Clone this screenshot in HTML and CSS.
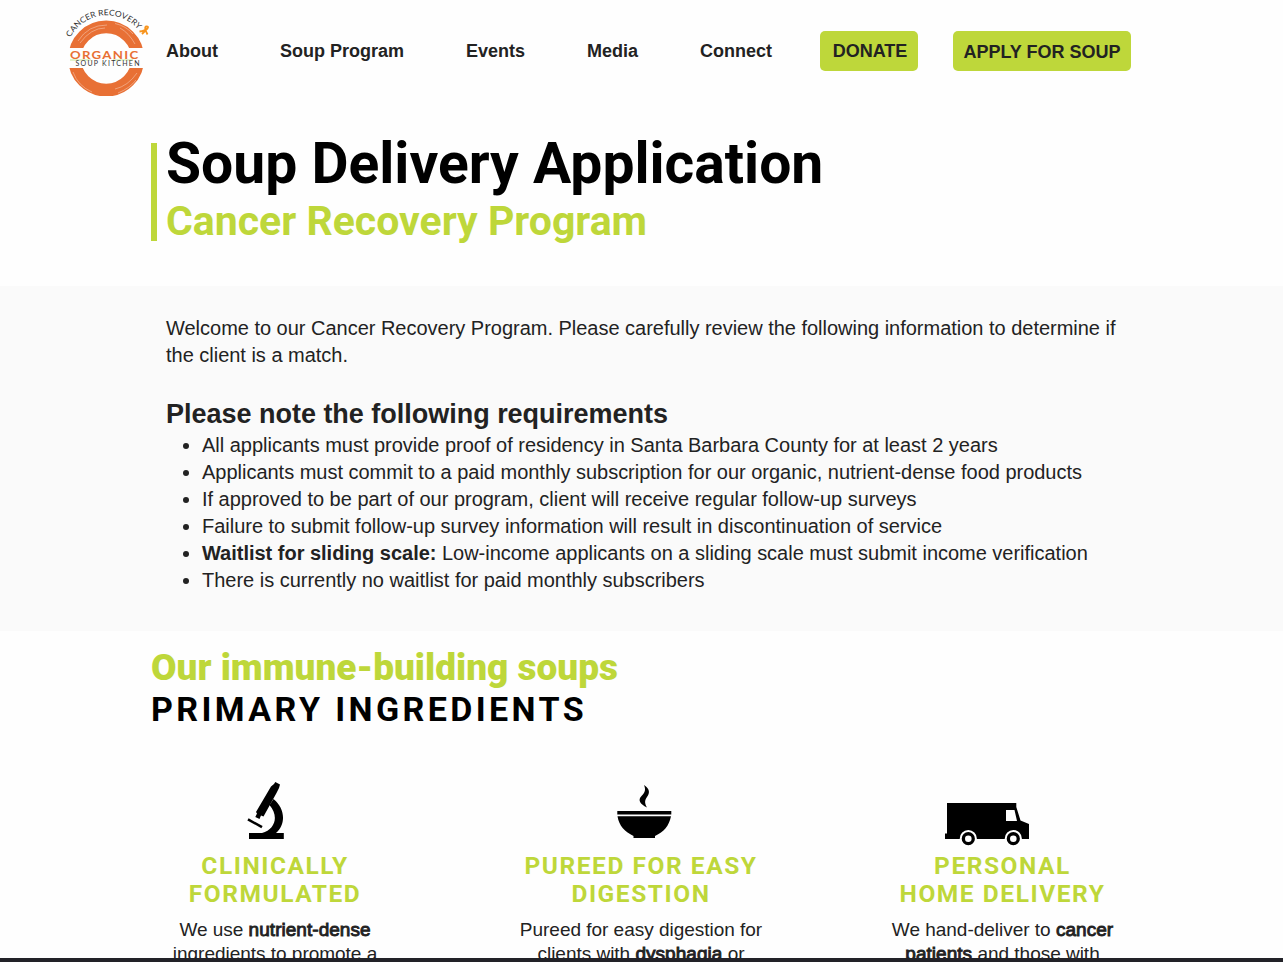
FILE: index.html
```html
<!DOCTYPE html>
<html lang="en">
<head>
<meta charset="utf-8">
<title>Soup Delivery Application</title>
<link rel="stylesheet" href="styles.css">
</head>
<body>
<header class="header">
  <svg class="logo" viewBox="0 0 90 97" role="img" aria-label="Cancer Recovery Organic Soup Kitchen">
    <defs>
      <path id="arc" d="M9.500 37.500A41 41 0 0 1 79 32"/>
      <clipPath id="halves"><path d="M0 0H90V48H0ZM0 68H90V96H0Z"/></clipPath>
    </defs>
    <g clip-path="url(#halves)" fill="none">
      <circle cx="45.200" cy="58.500" r="31.600" stroke="#e87035" stroke-width="12.800"/>
      <path d="M17 41Q27 25 46 25M19 43Q30 28 44 28M54 23.500Q65 26 72 34M59 28Q68 33 74 44M54 89Q67 86 76 73M57 93Q69 88 75 80M12 72Q17 86 31 92" stroke="#fff" stroke-width=".7" opacity=".5"/>
    </g>
    <text class="logo-arc"><textPath href="#arc" textLength="80" lengthAdjust="spacingAndGlyphs">CANCER RECOVERY</textPath></text>
    <path d="M9 60H30M52 60H72" stroke="#c3e59a" stroke-width="1"/>
    <text class="logo-name" x="9" y="58.500" textLength="69.500" lengthAdjust="spacingAndGlyphs">ORGANIC</text>
    <text class="logo-sub" x="14.500" y="65.600" textLength="64">SOUP KITCHEN</text>
    <path d="M78.500 31.500Q84 31 86.500 28.500Q88 26.500 85.500 26.500Q82.500 27 86.500 34.500M84.500 30.500L81 34" fill="none" stroke="#f7941d" stroke-width="1.800"/>
  </svg>
  <nav class="nav">
    <a>About</a><a>Soup Program</a><a>Events</a><a>Media</a><a>Connect</a>
  </nav>
  <a class="button donate">DONATE</a>
  <a class="button apply">APPLY FOR SOUP</a>
</header>
<main>
  <section class="hero">
    <div class="hero-rule"></div>
    <div>
      <h1>Soup Delivery Application</h1>
      <p class="subtitle">Cancer Recovery Program</p>
    </div>
  </section>
  <section class="notice">
    <p>Welcome to our Cancer Recovery Program. Please carefully review the following information to determine if<br>the client is a match.</p>
    <h2>Please note the following requirements</h2>
    <ul>
      <li>All applicants must provide proof of residency in Santa Barbara County for at least 2 years</li>
      <li>Applicants must commit to a paid monthly subscription for our organic, nutrient-dense food products</li>
      <li>If approved to be part of our program, client will receive regular follow-up surveys</li>
      <li>Failure to submit follow-up survey information will result in discontinuation of service</li>
      <li><b>Waitlist for sliding scale:</b> Low-income applicants on a sliding scale must submit income verification</li>
      <li>There is currently no waitlist for paid monthly subscribers</li>
    </ul>
  </section>
  <section class="soups">
    <h2 class="soups-title">Our immune-building soups</h2>
    <h3 class="soups-sub">PRIMARY INGREDIENTS</h3>
    <div class="features">
      <article>
        <svg class="icon" width="70" viewBox="240 772 70 76">
          <path d="M275.300 782L280 784.500L279 788L276.500 793L263.500 816.500L261 815.500L259.500 819L255.300 817L257 813.500L256 812L271 786.500L274 784Z"/>
          <path d="M273.500 799C285.500 809 286 824 276 833H283.800V839H249V833H262C275.500 829 279 816 269.500 805Z"/>
          <path d="M248 819.300L262 827.200" stroke="#000" stroke-width="2.500"/>
        </svg>
        <h4>CLINICALLY<br>FORMULATED</h4>
        <p>We use <b>nutrient-dense</b><br>ingredients to promote a</p>
      </article>
      <article>
        <svg class="icon" width="80" viewBox="601 772 80 76">
          <path d="M617.300 811H671.300V814.500H617.300ZM617.500 816.300H671C669 826 664 832 655 836V838H633.500V836C625 832 619 826 617.500 816.300Z"/>
          <path d="M644 785C650 789 650 793 647 797C644.500 800.500 644.500 803 647 807.500C640 804 637.500 800 641.500 796C645 792.500 646 790 644 785Z"/>
        </svg>
        <h4>PUREED FOR EASY<br>DIGESTION</h4>
        <p>Pureed for easy digestion for<br>clients with <b>dysphagia</b> or</p>
      </article>
      <article>
        <svg class="icon" width="135" viewBox="935 772 135 76">
          <path fill-rule="evenodd" d="M947 803H1016.300V807L1020.500 820.500L1029 824V839H945V833.500H947ZM1006 810V821H1017L1014.500 810Z"/>
          <g stroke="#fff" stroke-width="2"><circle cx="968.300" cy="838.700" r="7.600"/><circle cx="1013.300" cy="838.700" r="7.600"/></g>
          <g fill="#fff"><circle cx="968.300" cy="838.700" r="3.300"/><circle cx="1013.300" cy="838.700" r="3.300"/></g>
        </svg>
        <h4>PERSONAL<br>HOME DELIVERY</h4>
        <p>We hand-deliver to <b>cancer</b><br><b>patients</b> and those with</p>
      </article>
    </div>
  </section>
</main>
<div class="bottom-bar"></div>
</body>
</html>
```
FILE: styles.css
```css
* { box-sizing: border-box; }
body { margin: 0; height: 962px; display: flex; flex-direction: column; overflow: hidden; background: #fefefe; color: #222; font-family: "Liberation Sans", Arial, sans-serif; }
h1, h2, h3, h4, p, ul { margin: 0; white-space: nowrap; }
main { flex: 1; min-height: 0; overflow: hidden; }
.header { height: 97px; flex: none; display: flex; align-items: flex-start; padding-left: 61px; }
.logo { width: 90px; height: 97px; flex: none; }
.logo-arc { font: 8px Lato, sans-serif; fill: #333; }
.logo-name { font: 700 10.5px Lato, sans-serif; letter-spacing: 1px; fill: #e87035; }
.logo-sub { font: 7px Lato, sans-serif; fill: #333; }
.nav { display: flex; gap: 62px; padding: 41px 0 0 15px; width: 669px; flex: none; font-weight: 700; font-size: 18px; line-height: 20px; white-space: nowrap; }
.button { height: 40px; margin-top: 31px; border-radius: 5px; background: #bed73a; font-weight: 700; font-size: 18px; line-height: 40px; text-align: center; white-space: nowrap; }
.donate { width: 98px; padding-left: 2px; }
.apply { width: 178px; margin-left: 35px; line-height: 42px; }
.hero { display: flex; height: 189px; padding: 46px 0 0 151px; gap: 9px; }
.hero-rule { width: 6px; height: 98px; background: #bed73a; }
h1 { font: 700 57px/66px Roboto, sans-serif; color: #000; margin-top: -12px; }
.subtitle { font: 700 41px/48px Roboto, sans-serif; color: #bed73a; }
.notice { height: 345px; background: #fafafa; padding: 29px 0 0 166px; font-size: 20px; line-height: 27px; letter-spacing: -.016px; }
.notice h2 { font-size: 27px; line-height: 36px; margin-top: 27px; }
.notice ul { padding-left: 36px; }
.soups { padding: 16px 0 0 151px; }
.soups-title { font: 900 37px/42px Roboto, sans-serif; color: #bed73a; }
.soups-sub { font: 700 34px/40px Roboto, sans-serif; letter-spacing: 3.4px; color: #000; }
.features { display: grid; grid-template-columns: 248px 484px 239px; margin-top: 43px; text-align: center; }
.icon { height: 76px; display: block; margin: 0 auto; }
h4 { font: 700 24.5px/28px Roboto, sans-serif; letter-spacing: 1.55px; color: #bed73a; margin-top: 4px; }
.features p { font-size: 19px; line-height: 24px; margin-top: 10px; letter-spacing: -.02px; }
.features b { font-weight: 400; letter-spacing: .04px; -webkit-text-stroke: .9px #222; }
.bottom-bar { height: 4px; flex: none; background: #222228; }
```
